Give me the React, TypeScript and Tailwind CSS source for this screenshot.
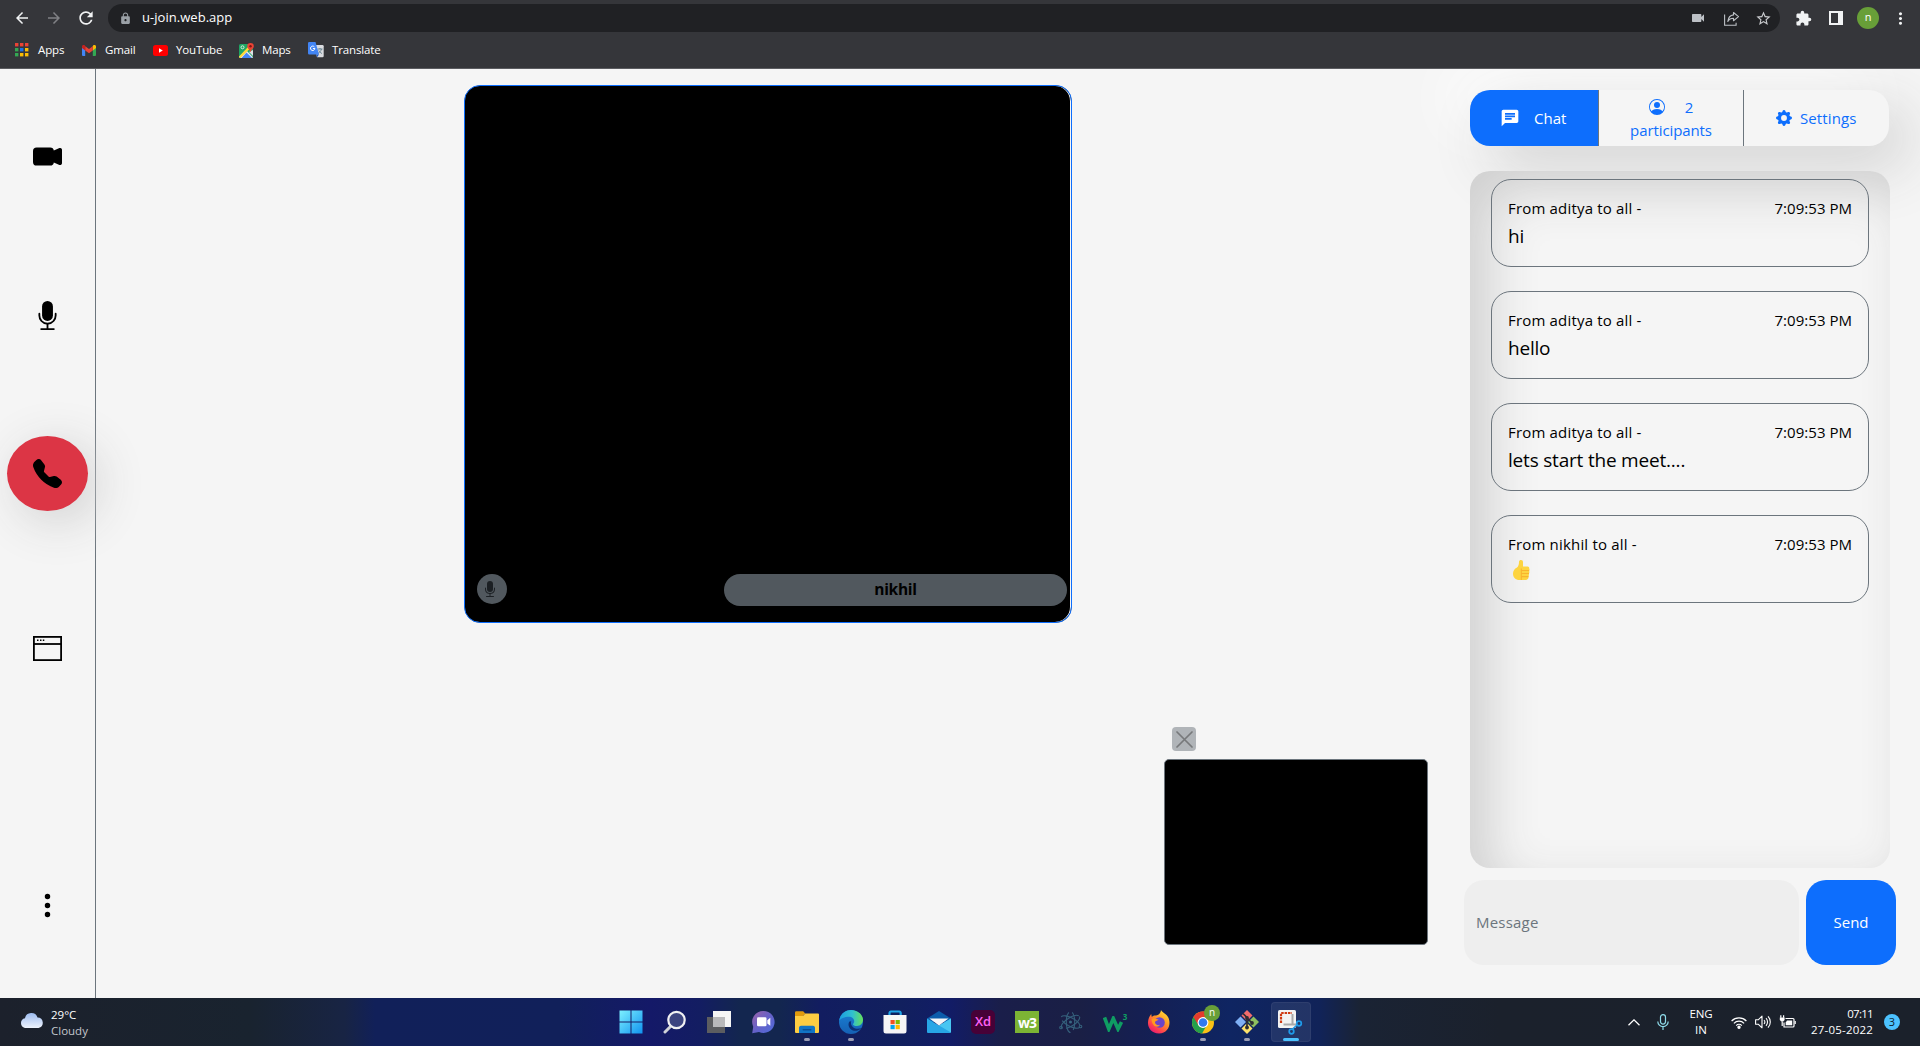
import React from "react";
import {
  BsCameraVideoFill,
  BsMicFill,
  BsTelephoneFill,
  BsThreeDotsVertical,
  BsPersonCircle,
  BsGearFill,
} from "react-icons/bs";
import {
  MdArrowBack,
  MdArrowForward,
  MdRefresh,
  MdLock,
  MdVideocam,
  MdStarBorder,
  MdExtension,
  MdMoreVert,
  MdChat,
} from "react-icons/md";

const UI = "font-['Open_Sans','Noto_Sans',sans-serif]";

/* ---------- browser chrome ---------- */

function AppsIcon() {
  const colors = ["#ea4335", "#ea4335", "#ea4335", "#34a853", "#1a73e8", "#fbbc04", "#34a853", "#fbbc04", "#fbbc04"];
  return (
    <svg width="14" height="14" viewBox="0 0 14 14">
      {colors.map((c, i) => (
        <rect key={i} x={(i % 3) * 5} y={Math.floor(i / 3) * 5} width="3.4" height="3.4" fill={c} />
      ))}
    </svg>
  );
}

function GmailIcon() {
  return (
    <svg width="14" height="11" viewBox="0 0 14 11">
      <path d="M0 1.5V10a1 1 0 0 0 1 1h2.2V3.8z" fill="#4285f4" />
      <path d="M14 1.5V10a1 1 0 0 1-1 1h-2.2V3.8z" fill="#34a853" />
      <path d="M10.8 1.2v4.3L14 3.1V1.6C14 .2 12.4-.6 11.3.3z" fill="#fbbc04" />
      <path d="M3.2 5.5V1.2L7 4l3.800-2.800v4.300L7 8.300z" fill="#ea4335" />
      <path d="M0 1.600v1.500l3.200 2.400V1.200L2.700.3C1.600-.6 0 .2 0 1.600z" fill="#c5221f" />
    </svg>
  );
}

function YouTubeIcon() {
  return (
    <svg width="15" height="11" viewBox="0 0 15 11">
      <rect width="15" height="11" rx="2.500" fill="#f00" />
      <path d="M6 3.300v4.400l3.800-2.200z" fill="#fff" />
    </svg>
  );
}

function MapsIcon() {
  return (
    <svg width="15" height="15" viewBox="0 0 15 15">
      <rect y="1" width="14" height="14" rx="1.500" fill="#1fa463" />
      <path d="M0 14L7 7l7 7.200a1.500 1.500 0 0 1-1 .8H1.500z" fill="#e8eaed" />
      <path d="M2.500 15L7.500 9.500 13 15z" fill="#4285f4" />
      <path d="M0 13.500L9 4l1.500 2L1.500 15A1.500 1.500 0 0 1 0 13.500z" fill="#fdd835" />
      <path d="M10 9l4 4V7z" fill="#dfe1e5" />
      <circle cx="3.500" cy="4.300" r="1.500" fill="none" stroke="#e8f5e9" strokeWidth=".9" />
      <path d="M11.500 0a3.300 3.300 0 0 0-3.300 3.300C8.200 5.500 11 6.500 11.500 9.500 12 6.500 14.800 5.500 14.800 3.300A3.300 3.300 0 0 0 11.500 0z" fill="#ea4335" />
      <circle cx="11.500" cy="3.300" r="1.200" fill="#811411" />
    </svg>
  );
}

function TranslateIcon() {
  return (
    <svg width="16" height="16" viewBox="0 0 16 16">
      <path d="M6 3h8.500A1.200 1.200 0 0 1 15.700 4.200v9.800a1.200 1.200 0 0 1-1.200 1.200H9z" fill="#dadce0" />
      <path d="M9.500 7h5M12 6v1M13.500 7c-.5 2-2 3.500-3.500 4.500M10.800 8.500c.8 1.500 2 2.500 3.200 3" stroke="#607d8b" strokeWidth=".9" fill="none" />
      <path d="M1.200 0h6.300l3.500 12.500H1.200A1.200 1.200 0 0 1 0 11.300V1.200A1.200 1.200 0 0 1 1.200 0z" fill="#4285f4" />
      <path d="M9 15.300l2-2.800H8.200z" fill="#1a56c4" />
      <path d="M6.400 4.900A2.200 2.200 0 1 0 6.900 6.500H4.900" stroke="#fff" strokeWidth="1" fill="none" />
    </svg>
  );
}

function ShareIcon() {
  return (
    <svg width="16" height="15" viewBox="0 0 16 15" fill="none" stroke="#bdc1c6" strokeWidth="1.100">
      <path d="M.6 3.500v10.800h11.500v-2.500" />
      <path d="M9.500 1.500L14.500 5.600 9.500 9.700V7.300C6.800 7.300 5 8.300 3.800 10.500 4.200 7 6 4.300 9.500 3.900z" strokeLinejoin="round" />
    </svg>
  );
}

function Bookmark({ icon, label, text }: { icon: React.ReactNode; label: string; text: string }) {
  return (
    <div className="flex items-center">
      {icon}
      <span className={text}>{label}</span>
    </div>
  );
}

function BrowserChrome() {
  return (
    <header className="flex h-[69px] shrink-0 flex-col border-b border-[#5b5c60] bg-[#35363a] text-white">
      <div className="flex h-9 items-center px-[13px]">
        <MdArrowBack className="mr-[14px] size-[18px] shrink-0 text-[#f1f3f4]" />
        <MdArrowForward className="mr-[13px] size-[18px] shrink-0 text-[#808185]" />
        <MdRefresh className="mr-[12px] size-[20px] shrink-0 text-[#f1f3f4]" />
        <div className="flex h-7 w-[1672px] shrink-0 items-center rounded-full bg-[#202124] pl-[11px] pr-[8px]">
          <MdLock className="size-[13px] text-[#9aa0a6]" />
          <span className={`${UI} ml-[10px] -mt-px text-[13px] tracking-[0.04px]`}>u-join.web.app</span>
          <div className="ml-auto flex items-center">
            <MdVideocam className="mr-[18px] size-[16px] text-[#bdc1c6]" />
            <ShareIcon />
            <MdStarBorder className="ml-[15px] size-[17px] text-[#c8cacd]" />
          </div>
        </div>
        <MdExtension className="ml-[15px] size-[17px] shrink-0 text-[#f1f3f4]" />
        <svg className="ml-[17px] shrink-0" width="14" height="14" viewBox="0 0 14 14">
          <path d="M0 0h14v14H0zM2 2v10h7V2z" fill="#f1f3f4" fillRule="evenodd" />
        </svg>
        <span className={`${UI} ml-[14px] flex size-[22px] shrink-0 items-center justify-center rounded-full bg-[#689f38] pb-px text-[11px]`}>n</span>
        <MdMoreVert className="ml-[12px] size-[19px] shrink-0 text-[#f1f3f4]" />
      </div>
      <div className={`${UI} flex h-7 items-center pl-[15px] text-[11.500px] tracking-[-0.14px]`}>
        <Bookmark icon={<AppsIcon />} label="Apps" text="ml-[9px] w-[44px]" />
        <Bookmark icon={<GmailIcon />} label="Gmail" text="ml-[9px] w-[48px]" />
        <Bookmark icon={<YouTubeIcon />} label="YouTube" text="ml-[8px] w-[63px]" />
        <Bookmark icon={<MapsIcon />} label="Maps" text="ml-[8px] w-[46px]" />
        <Bookmark icon={<TranslateIcon />} label="Translate" text="ml-[8px]" />
      </div>
    </header>
  );
}

/* ---------- meeting page ---------- */

function WindowIcon() {
  return (
    <svg className="mt-[125px]" width="29" height="25" viewBox="0 0 29 25" fill="none" stroke="#000">
      <rect x=".9" y=".9" width="27.200" height="23.200" strokeWidth="1.800" />
      <path d="M1 8h27" strokeWidth="1.800" />
      <path d="M4 4.300h1.500M7 4.300h1.500M9.800 4.300h1.500" strokeWidth="1.500" />
    </svg>
  );
}

function Sidebar() {
  return (
    <nav className="flex w-24 shrink-0 flex-col items-center border-r border-[#6c757d] pt-[73px] text-black">
      <BsCameraVideoFill className="size-[29px]" />
      <BsMicFill className="mt-[130px] size-[29px]" />
      <button className="mt-[106px] flex h-[75px] w-[81px] items-center justify-center rounded-[50%] bg-[#dc3545] shadow-[10px_10px_50px_#d0d0d0]">
        <BsTelephoneFill className="size-[29px]" />
      </button>
      <WindowIcon />
      <BsThreeDotsVertical className="mt-[230px] size-[29px]" />
    </nav>
  );
}

function Stage() {
  return (
    <main className="flex w-[1368px] flex-col">
      <section className="mt-4 ml-[368px] flex h-[538px] w-[608px] items-end rounded-[16px] border border-[#0d6efd] bg-black pb-[16px] pl-3 pr-1 shadow-[inset_-1px_0_0_#f5f5f5]">
        <span className="mb-[2px] flex size-[30px] items-center justify-center rounded-full bg-[#51585e] pr-1 text-[#1c2024]">
          <BsMicFill className="size-4" />
        </span>
        <span className={`${UI} ml-auto flex h-8 w-[343px] items-center justify-center rounded-full bg-[#51585e] text-[15.500px] font-bold tracking-[-0.3px] text-black`}>
          nikhil
        </span>
      </section>
      <button className="mt-[104px] ml-[1076px] flex size-6 items-center justify-center rounded bg-[#b0b4b8]">
        <svg width="17" height="17" viewBox="0 0 17 17" stroke="#77797b" strokeWidth="1.700" strokeLinecap="round">
          <path d="M1 1l15 15M16 1L1 16" />
        </svg>
      </button>
      <section className="mt-2 ml-[1068px] h-[186px] w-[264px] rounded-[5px] border border-[#6c757d] bg-black" />
    </main>
  );
}

const messages = [
  { from: "aditya", body: "hi" },
  { from: "aditya", body: "hello" },
  { from: "aditya", body: "lets start the meet...." },
  { from: "nikhil", body: null },
];

function ThumbsUp() {
  return (
    <svg className="mt-[5px] ml-[5px]" width="17" height="21" viewBox="0 0 17 21">
      <path d="M6 1.800C6 .6 7 0 8 0c1.300 0 2 .9 2 2.200V6.500h4.700c1.200 0 1.700 1 1.500 2 .4.700.5 1.800 0 2.600.3.900.3 1.900-.3 2.700.2 1 0 1.900-.5 2.600.2 1.200 0 2.200-.9 2.900-.4.500-1 .7-1.700.7H6.500C2.500 20 0 17.500 0 13.500 0 11 1.500 8.500 4 7.500 5.500 6.500 6 4 6 1.800z" fill="#fdd440" />
      <path d="M8.300 8.500V20M8.500 10.500h7.500M8.500 13.500h7.500M8.500 16.600h7" stroke="#f9b42d" strokeWidth="1.100" fill="none" />
    </svg>
  );
}

function ChatPanel() {
  return (
    <aside className={`${UI} flex w-[456px] flex-col text-[#0d6efd]`}>
      <div className="mt-[21px] ml-[6px] flex h-14 w-[419px] rounded-[20px] bg-[#f5f5f5] text-[15px] leading-6 shadow-[20px_20px_60px_#d0d0d0,-20px_-20px_60px_#ffffff]">
        <button className="flex w-[129px] items-center rounded-l-[20px] border-r border-[#6c757d] bg-[#0d6efd] pl-[30px] text-white">
          <MdChat className="size-[20px]" />
          <span className="ml-[14px] pb-px">Chat</span>
        </button>
        <button className="flex w-[145px] flex-col items-center justify-center border-r border-[#6c757d]">
          <span className="flex h-6 items-center">
            <BsPersonCircle className="mr-5 size-4" />2
          </span>
          <span className="-mt-px tracking-[-0.1px]">participants</span>
        </button>
        <button className="flex flex-1 items-center pl-[32px]">
          <BsGearFill className="size-4" />
          <span className="ml-[8px] pb-px tracking-[0.1px]">Settings</span>
        </button>
      </div>
      <div className="mt-[25px] ml-[6px] flex h-[697px] w-[420px] flex-col gap-6 rounded-[20px] bg-[#f5f5f5] px-[21px] pt-2 text-black shadow-[inset_20px_20px_50px_#d0d0d0]">
        {messages.map((m, i) => (
          <article key={i} className="h-[88px] rounded-[20px] border border-[#6c757d] px-4 pt-[15px]">
            <div className="flex h-6 justify-between text-[15px] leading-[26px]">
              <span className="tracking-[0.18px]">From {m.from} to all -</span>
              <span className="tracking-[0.03px]">7:09:53 PM</span>
            </div>
            <div className="h-[30px] text-[19px] leading-[34px] tracking-[-0.2px]">{m.body ?? <ThumbsUp />}</div>
          </article>
        ))}
      </div>
      <div className="mt-3 flex gap-[7px] text-[15px]">
        <div className="flex h-[85px] w-[335px] items-center rounded-[20px] bg-[#eee] pl-3 tracking-[0.2px] text-[#6c757d]">Message</div>
        <button className="flex h-[85px] w-[90px] items-center justify-center rounded-[20px] bg-[#0d6efd] text-white">Send</button>
      </div>
    </aside>
  );
}

/* ---------- taskbar ---------- */

function StartIcon() {
  return (
    <svg width="24" height="24" viewBox="0 0 24 24">
      <defs>
        <linearGradient id="win" x1="0" y1="0" x2="1" y2="1">
          <stop offset="0" stopColor="#7df0ff" />
          <stop offset="1" stopColor="#1093f0" />
        </linearGradient>
      </defs>
      <path d="M.5.5h11v11H.5zM12.500.5h11v11h-11zM.5 12.500h11v11H.5zM12.500 12.500h11v11h-11z" fill="url(#win)" />
    </svg>
  );
}

function SearchIcon() {
  return (
    <svg width="24" height="24" viewBox="0 0 24 24">
      <path d="M8 16L2 22" stroke="#cfd2d8" strokeWidth="3" strokeLinecap="round" />
      <circle cx="13.500" cy="10" r="8.200" fill="#3c4480" stroke="#f0f0f2" strokeWidth="2.200" />
    </svg>
  );
}

function TaskViewIcon() {
  return (
    <svg width="24" height="24" viewBox="0 0 24 24">
      <rect x="6" y="1" width="18" height="16" fill="#f5f5f5" />
      <rect x="0" y="7" width="18" height="16" fill="#5c5d60" />
      <rect x="6" y="7" width="12" height="10" fill="#b9b9bb" />
    </svg>
  );
}

function MeetIcon() {
  return (
    <svg width="24" height="24" viewBox="0 0 24 24">
      <defs>
        <linearGradient id="meet" x1="0" y1="0" x2="1" y2="1">
          <stop offset="0" stopColor="#9b62a8" />
          <stop offset=".5" stopColor="#6561c8" />
          <stop offset="1" stopColor="#4d6bdc" />
        </linearGradient>
      </defs>
      <path d="M12.500 1A11 11 0 1 1 8 22l-6.800 1.200 1-6.500A11 11 0 0 1 12.500 1z" fill="url(#meet)" />
      <rect x="6" y="7.300" width="9.500" height="9" rx="1.300" fill="#fff" />
      <path d="M16.300 10.200l3-2.400v8l-3-2.400z" fill="#fff" />
    </svg>
  );
}

function FolderIcon() {
  return (
    <svg width="24" height="24" viewBox="0 0 24 24">
      <path d="M0 2.500A1.200 1.200 0 0 1 1.200 1.300h7l2 2.300L8 6H0z" fill="#e19a0c" />
      <path d="M0 6h8l2.200-2.600H23A1 1 0 0 1 24 4.400V22a1 1 0 0 1-1 1H1a1 1 0 0 1-1-1z" fill="#fdcc42" />
      <path d="M4 23v-5.500A2 2 0 0 1 6 15.700h12a2 2 0 0 1 2 1.800V23z" fill="#1174c6" />
      <rect x="7.500" y="19" width="9" height="1.600" rx=".8" fill="#0a4f97" />
    </svg>
  );
}

function EdgeIcon() {
  return (
    <svg width="24" height="24" viewBox="0 0 24 24">
      <defs>
        <linearGradient id="edgeTop" x1="0" y1=".5" x2="1" y2=".5">
          <stop offset="0" stopColor="#1b9de0" />
          <stop offset=".55" stopColor="#30bfd0" />
          <stop offset="1" stopColor="#66e05a" />
        </linearGradient>
        <linearGradient id="edgeLow" x1="0" y1="0" x2="0" y2="1">
          <stop offset="0" stopColor="#1a83d6" />
          <stop offset="1" stopColor="#1560b4" />
        </linearGradient>
      </defs>
      <circle cx="12" cy="12" r="12" fill="url(#edgeLow)" />
      <path d="M.2 11C1 4.500 6 0 12 0c7 0 12 4.800 12 9.800 0 3.700-2.800 6.200-6 6.200-2.500 0-4-.9-4-1.800 0-.7 1.200-1.200 1.200-3 0-2.400-2.300-4.400-5.200-4.400C5.500 6.800 1.500 8.500.2 11z" fill="url(#edgeTop)" />
      <path d="M10.500 11.500c-2 2.300-1 7.500 3.500 9 3 1 6.500-.2 8.500-2.500-2.500 1-6 1.300-8.500-.8-2-1.700-2.500-3.900-1.800-5.900z" fill="#0d2f75" />
    </svg>
  );
}

function StoreIcon() {
  return (
    <svg width="24" height="24" viewBox="0 0 24 24">
      <path d="M6.500 6V2.800A1.500 1.500 0 0 1 7.800 1.500h8.400A1.500 1.500 0 0 1 17.700 2.800V6" fill="none" stroke="#1fa5e8" strokeWidth="2.200" />
      <path d="M.5 5h23v16a2.500 2.500 0 0 1-2.500 2.500H3A2.500 2.500 0 0 1 .5 21z" fill="#f6f6f6" />
      <rect x="7.500" y="10" width="4.200" height="4.200" fill="#f25022" />
      <rect x="12.600" y="10" width="4.200" height="4.200" fill="#7fba00" />
      <rect x="7.500" y="15" width="4.200" height="4.200" fill="#00a4ef" />
      <rect x="12.600" y="15" width="4.200" height="4.200" fill="#ffb900" />
    </svg>
  );
}

function MailIcon() {
  return (
    <svg width="24" height="24" viewBox="0 0 24 24">
      <path d="M0 8.500L12 1l12 7.500V12H0z" fill="#0c5cab" />
      <path d="M0 8.500l12 7 12-7V22a1 1 0 0 1-1 1H1a1 1 0 0 1-1-1z" fill="#27a6e6" />
      <path d="M24 8.500v14L12 15.500z" fill="#48c6f2" />
      <path d="M2.500 8.500h19L12 15.500z" fill="#f4f6f8" />
    </svg>
  );
}

function ElectronIcon() {
  return (
    <svg width="24" height="24" viewBox="0 0 24 24" fill="none" stroke="#35607c" strokeWidth="1.100">
      <ellipse cx="11.500" cy="12" rx="10.500" ry="4.200" transform="rotate(28 11.500 12)" strokeDasharray="20 4 22 3" />
      <ellipse cx="11.500" cy="12" rx="10.500" ry="4.200" transform="rotate(-32 11.500 12)" strokeDasharray="19 4 24 3" />
      <ellipse cx="11.500" cy="12" rx="10.500" ry="4.200" transform="rotate(90 11.500 12)" strokeDasharray="22 4 18 4" />
      <circle cx="11.500" cy="12" r="1" fill="#46849c" />
      <circle cx="2" cy="17.500" r="1.300" />
      <circle cx="21.500" cy="16.500" r="1.300" />
    </svg>
  );
}

function FirefoxIcon() {
  return (
    <svg width="24" height="24" viewBox="0 0 24 24">
      <defs>
        <linearGradient id="fox" x1=".85" y1="0" x2=".2" y2="1">
          <stop offset="0" stopColor="#ffe83a" />
          <stop offset=".4" stopColor="#ff9a26" />
          <stop offset=".75" stopColor="#ff4050" />
          <stop offset="1" stopColor="#e01575" />
        </linearGradient>
      </defs>
      <path d="M14 0c1.500 3 5 3.500 7 7 3.500 6 1 16.500-9 16.500C4.500 23.500.7 18 1 12.500 1.200 9 2.200 6.500 4.200 4l.6 3C6 5.500 7 5.500 8.500 5.500 10 5.500 13.500 4.500 14 0z" fill="url(#fox)" />
      <circle cx="12.500" cy="12.500" r="5.300" fill="#6b45c9" />
      <path d="M4.500 9c3-2 5 .3 7 .6-1 1.600-3.300 1-3.500 3 .3 1.800 2.500 3.500 5 2.200C11 18.500 5 17 4.500 9z" fill="#ff9a1f" />
    </svg>
  );
}

function ChromeIcon() {
  return (
    <div className="relative">
      <svg width="24" height="24" viewBox="0 0 24 24">
        <circle cx="12" cy="12.500" r="11" fill="#fbc116" />
        <path d="M12 12.500L2.500 7A11 11 0 0 0 11 23.500l4.300-7.500z" fill="#24a04b" />
        <path d="M12 7h9.500A11 11 0 0 0 2.500 7l4.700 8z" fill="#e33b2e" />
        <circle cx="12" cy="12.500" r="5.400" fill="#fff" />
        <circle cx="12" cy="12.500" r="4.300" fill="#3079ee" />
      </svg>
      <span className={`${UI} absolute -top-[5px] left-[13px] flex size-4 items-center justify-center rounded-full bg-[#689f38] pb-px text-[10px] text-white`}>n</span>
    </div>
  );
}

function GitIcon() {
  return (
    <svg width="24" height="24" viewBox="0 0 24 24">
      <path d="M12 0l5.500 5.500L12 11 6.500 5.500z" fill="#f06c6c" />
      <path d="M5.500 6.500L11 12l-5.500 5.500L0 12z" fill="#7fb0f5" />
      <path d="M18.500 6.500L24 12l-5.500 5.500L13 12z" fill="#8dbf5f" />
      <path d="M12 13l5.500 5.500L12 24l-5.500-5.500z" fill="#fbe06a" />
      <path d="M8 3.500l4 4v10M12 8l5 5" stroke="#2b2d33" strokeWidth="1.700" fill="none" />
      <circle cx="12" cy="8" r="1.900" fill="#2b2d33" />
      <circle cx="12" cy="17.500" r="1.900" fill="#2b2d33" />
      <circle cx="17" cy="13" r="1.900" fill="#2b2d33" />
    </svg>
  );
}

function SnipIcon() {
  return (
    <svg className="-ml-0.5" width="26" height="26" viewBox="0 0 26 26">
      <rect x="1" y="1" width="18" height="18" rx="1.500" fill="#f3f3f3" />
      <path d="M4 14V4h11" stroke="#cf3a12" strokeWidth="2.200" strokeDasharray="2.500 .9" fill="none" />
      <path d="M15.500 5v10.500M6.500 15.500H19" stroke="#a9a9a9" strokeWidth="2" fill="none" />
      <circle cx="22" cy="14.500" r="2.300" fill="none" stroke="#1f9bea" strokeWidth="1.700" />
      <circle cx="14.500" cy="22.500" r="2.300" fill="none" stroke="#1f9bea" strokeWidth="1.700" />
      <path d="M20 16l-4.500 4" stroke="#1f9bea" strokeWidth="1.500" />
    </svg>
  );
}

const apps: { icon: React.ReactNode; state?: "open" | "active" }[] = [
  { icon: <StartIcon /> },
  { icon: <SearchIcon /> },
  { icon: <TaskViewIcon /> },
  { icon: <MeetIcon /> },
  { icon: <FolderIcon />, state: "open" },
  { icon: <EdgeIcon />, state: "open" },
  { icon: <StoreIcon /> },
  { icon: <MailIcon /> },
  {
    icon: (
      <span className={`${UI} flex size-6 items-center justify-center rounded-[5px] bg-[#470137] text-[13px] font-semibold text-[#ff61f6]`}>Xd</span>
    ),
  },
  {
    icon: (
      <span className={`${UI} flex h-[22px] w-6 items-center justify-center bg-[#7cb434] text-[14px] font-bold tracking-[-1px] text-white`}>w3</span>
    ),
  },
  { icon: <ElectronIcon /> },
  {
    icon: (
      <span className="flex items-start text-[#0f9d63]">
        <svg className="mt-1" width="20" height="16" viewBox="0 0 20 16">
          <path d="M1.500 1.500l4.300 11.500 4.500-10.500 4.700 10.500 3.500-7" stroke="currentColor" strokeWidth="3.600" fill="none" />
        </svg>
        <span className={`${UI} text-[8px] leading-[9px] font-bold`}>3</span>
      </span>
    ),
  },
  { icon: <FirefoxIcon /> },
  { icon: <ChromeIcon />, state: "open" },
  { icon: <GitIcon />, state: "open" },
  { icon: <SnipIcon />, state: "active" },
];

function Taskbar() {
  return (
    <footer
      className={`${UI} flex h-12 shrink-0 bg-[linear-gradient(90deg,#1c212c_0px,#19232f_250px,#182444_345px,#112059_375px,#11205a_560px,#141968_650px,#131d62_700px,#13264f_740px,#13264f_780px,#121d60_820px,#11205e_900px,#121c66_950px,#1a1e4a_1000px,#1a1f45_1080px,#151f52_1140px,#0f2562_1230px,#112358_1320px,#1a2334_1360px,#1b212c_1500px,#1b212b_1920px)] text-[11.500px] text-white`}
    >
      <div className="flex w-[609px] pl-5">
        <svg className="mt-[15px]" width="24" height="15" viewBox="0 0 24 15">
          <defs>
            <linearGradient id="cloud" x1="0" y1="0" x2="0" y2="1">
              <stop offset="0" stopColor="#9dbcf0" />
              <stop offset="1" stopColor="#eef3fc" />
            </linearGradient>
          </defs>
          <path d="M5 15A5 5 0 0 1 5 5.200 6.500 6.500 0 0 1 17.500 4.500 5.300 5.300 0 0 1 18.500 15z" fill="url(#cloud)" />
        </svg>
        <div className="mt-[9px] ml-[7px] leading-4">
          <div>29°C</div>
          <div className="text-[#c3c6cc]">Cloudy</div>
        </div>
      </div>
      <div className="flex">
        {apps.map((a, i) => (
          <div
            key={i}
            className={`relative flex items-center justify-center ${a.state === "active" ? "mx-0.5 my-1 w-10 rounded border border-white/5 bg-white/8" : "w-11"}`}
          >
            {a.icon}
            {a.state === "open" && <span className="absolute bottom-[5px] h-[3px] w-1.5 rounded-full bg-[#9a9db4]" />}
            {a.state === "active" && <span className="absolute bottom-0 h-[3px] w-4 rounded-full bg-[#4cc2ff]" />}
          </div>
        ))}
      </div>
      <div className="ml-auto flex items-center pr-5">
        <svg className="mr-[17px]" width="12" height="7" viewBox="0 0 12 7" fill="none" stroke="#fff" strokeWidth="1.300">
          <path d="M.5 6.300L6 .9l5.500 5.400" />
        </svg>
        <svg className="mr-[19px]" width="12" height="16" viewBox="0 0 12 16" fill="none" stroke="#8fdcea" strokeWidth="1.200">
          <rect x="3.500" y=".6" width="5" height="9.500" rx="2.500" />
          <path d="M.8 7.500a5.200 5.200 0 0 0 10.400 0M6 12.700V16" />
        </svg>
        <div className="mr-[17px] w-[26px] text-center leading-4">
          <div className="tracking-[-0.1px]">ENG</div>
          <div>IN</div>
        </div>
        <svg className="mr-[8px]" width="16" height="13" viewBox="0 0 16 13" fill="none" stroke="#fff" strokeWidth="1.200">
          <path d="M.6 5a10.500 10.500 0 0 1 14.800 0M2.900 7.300a7.200 7.200 0 0 1 10.200 0M5.200 9.600a4 4 0 0 1 5.600 0" />
          <circle cx="8" cy="11.300" r="1.100" fill="#fff" />
        </svg>
        <svg className="mr-[7px]" width="17" height="14" viewBox="0 0 17 14" fill="none" stroke="#fff" strokeWidth="1.100">
          <path d="M.6 4.800h2.600L7 1.200v11.600L3.200 9.200H.6z" strokeLinejoin="round" />
          <path d="M9 5a3 3 0 0 1 0 4M11 3.200a5.500 5.500 0 0 1 0 7.600M13 1.300a8.200 8.200 0 0 1 0 11.400" />
        </svg>
        <svg className="mr-[13px]" width="17" height="14" viewBox="0 0 17 14" fill="none" stroke="#fff" strokeWidth="1.200">
          <path d="M6.500 3.500H14a1 1 0 0 1 1 1v6.500a1 1 0 0 1-1 1H5V7.500" />
          <path d="M8 5.500h5.200v4.800H6.700V7.500z" fill="#fff" stroke="none" />
          <path d="M16.200 6v3M1.800.3v2.500M4.600.3v2.500M3.200 6.500V11" />
          <path d="M.8 2.500h4.800V5L4.200 6.500H2.200L.8 5z" fill="#fff" stroke="none" />
        </svg>
        <div className="mr-[11px] w-[64px] text-right leading-4 whitespace-nowrap">
          <div className="tracking-[-0.700px]">07:11</div>
          <div className="tracking-[0.200px]">27-05-2022</div>
        </div>
        <span className="flex size-4 items-center justify-center rounded-full bg-[#4cc2ff] text-[11px] text-[#10202c]">3</span>
      </div>
    </footer>
  );
}

export default function App() {
  return (
    <div className="flex h-[1046px] w-[1920px] flex-col overflow-hidden bg-[#f5f5f5]">
      <BrowserChrome />
      <div className="flex h-[929px] overflow-hidden">
        <Sidebar />
        <Stage />
        <ChatPanel />
      </div>
      <Taskbar />
    </div>
  );
}
